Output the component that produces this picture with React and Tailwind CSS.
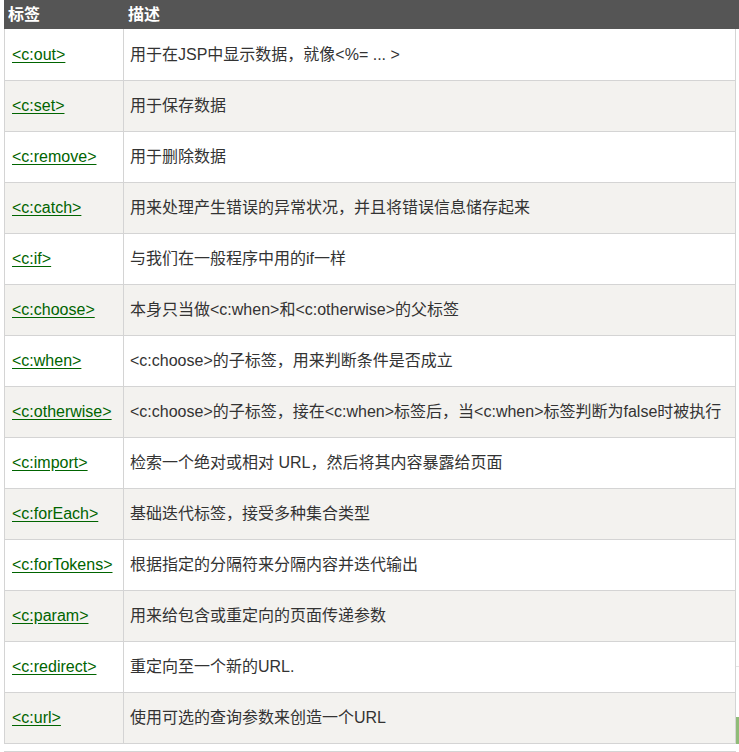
const rows = [
  ["<c:out>", "用于在JSP中显示数据，就像<%= ... >"],
  ["<c:set>", "用于保存数据"],
  ["<c:remove>", "用于删除数据"],
  ["<c:catch>", "用来处理产生错误的异常状况，并且将错误信息储存起来"],
  ["<c:if>", "与我们在一般程序中用的if一样"],
  ["<c:choose>", "本身只当做<c:when>和<c:otherwise>的父标签"],
  ["<c:when>", "<c:choose>的子标签，用来判断条件是否成立"],
  ["<c:otherwise>", "<c:choose>的子标签，接在<c:when>标签后，当<c:when>标签判断为false时被执行"],
  ["<c:import>", "检索一个绝对或相对 URL，然后将其内容暴露给页面"],
  ["<c:forEach>", "基础迭代标签，接受多种集合类型"],
  ["<c:forTokens>", "根据指定的分隔符来分隔内容并迭代输出"],
  ["<c:param>", "用来给包含或重定向的页面传递参数"],
  ["<c:redirect>", "重定向至一个新的URL."],
  ["<c:url>", "使用可选的查询参数来创造一个URL"],
];

const App = () => {
  return (
    <div
      className="w-[739px] h-[752px] overflow-hidden bg-white pl-[4px] text-[16px] text-[#333]"
      style={{ fontFamily: '"Liberation Sans", Arial, "Noto Sans CJK SC", sans-serif' }}
    >
      {/* header */}
      <div className="flex h-[29px] bg-[#555] text-white font-bold items-center">
        <div className="w-[120px] pl-[4px]">标签</div>
        <div className="pl-[4px]">描述</div>
      </div>

      <div className="flex">
        <div className="w-[732px] border-l border-r border-b border-[#d4d4d4]">
          {rows.map(([tag, desc], i) => (
            <div
              key={tag}
              className={`flex h-[51px] ${i > 0 ? "border-t border-[#d4d4d4]" : ""} ${
                i % 2 === 1 ? "bg-[#f3f2ef]" : "bg-white"
              }`}
            >
              <div className="w-[119px] shrink-0 flex items-center pl-[7px] border-r border-[#d4d4d4]">
                <a href="#" className="text-[#006400] underline underline-offset-[2px] whitespace-nowrap">
                  {tag}
                </a>
              </div>
              <div className="flex-1 flex items-center pl-[6px] whitespace-nowrap">{desc}</div>
            </div>
          ))}
        </div>

        {/* right edge strip */}
        <div className="w-[3px] flex flex-col">
          <div className="h-[637px]" />
          <div className="h-[1px] bg-[#e5e5e5]" />
          <div className="h-[50px]" />
          <div className="flex-1 bg-[#8fbc78]" />
        </div>
      </div>

      <div className="mt-[7px] h-[2px] w-[732px] border-t border-[#d4d4d4]" />
    </div>
  );
};

export default App;
